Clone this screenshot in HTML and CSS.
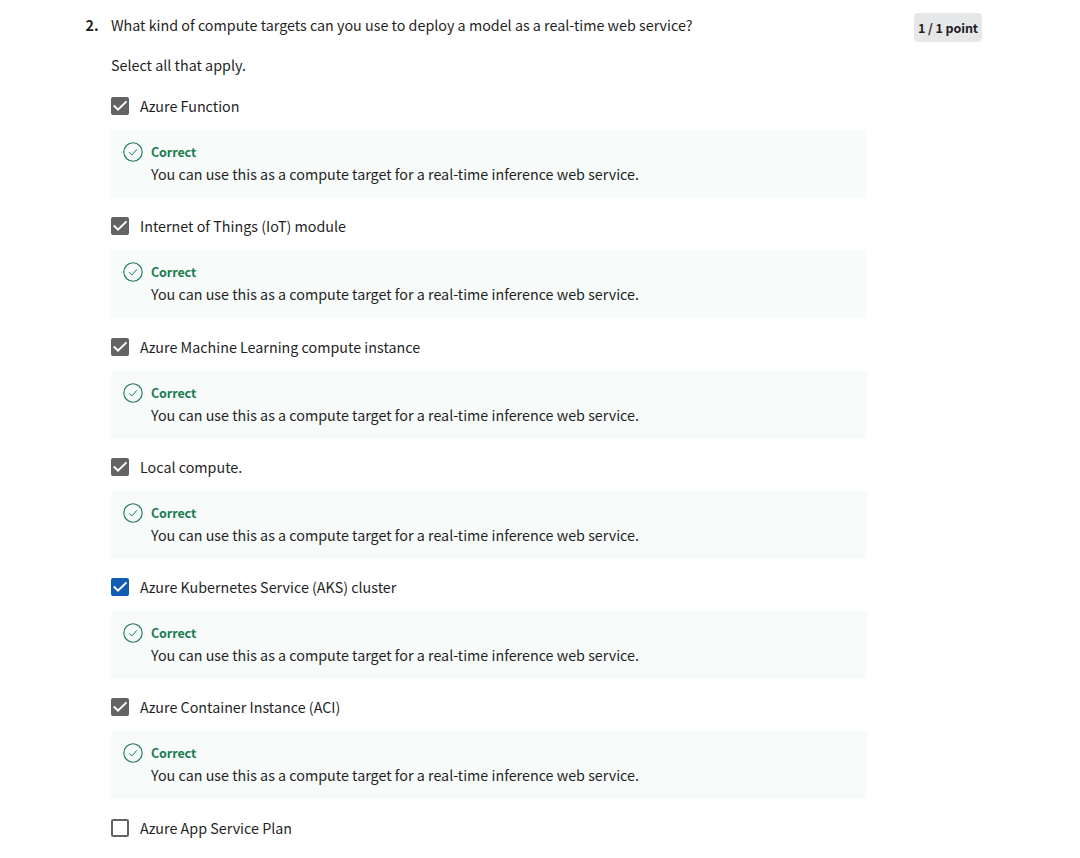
FILE: index.html
```
<!DOCTYPE html>
<html lang="en">
<head>
<meta charset="utf-8">
<title>Quiz</title>
<link rel="stylesheet" href="styles.css">
</head>
<body>
<svg width="0" height="0" class="defs">
  <symbol id="tick" viewBox="0 0 18 18"><path d="M2.8 8.5 7 12.6 15.5 4.4" fill="none" stroke="#fff" stroke-width="2"/></symbol>
  <symbol id="ok" viewBox="0 0 20 20"><g fill="none" stroke="#1d7c50"><circle cx="10" cy="10" r="9.2" stroke-width="1.1"/><path d="M6 10.2 8.8 13 14 7.2" stroke-width="1"/></g></symbol>
</svg>
<main class="question">
  <div class="number">2.</div>
  <div class="body">
    <p class="prompt">What kind of compute targets can you use to deploy a model as a real-time web service?</p>
    <p class="hint">Select all that apply.</p>
    <div class="options" id="options"></div>
  </div>
  <div class="points">1 / 1 point</div>
</main>
<script src="options.js"></script>
</body>
</html>
```
FILE: styles.css
```
* { box-sizing: border-box; }
body { margin: 0; background: #fff; color: #1f1f1f; font: 14.32px/24px "Noto Sans CJK SC", "Noto Sans", sans-serif; overflow: hidden; }
p { margin: 0; }
.defs { display: block; }
.question { display: flex; align-items: flex-start; padding: 13px 98px 0 85.5px; height: 858px; overflow: hidden; }
.number { width: 25.5px; font-weight: 700; }
.body { width: 756px; }
.hint { margin-top: 16px; }
.options { margin-top: 16.95px; }
.option { height: 120.3px; }
.choice { display: flex; align-items: center; gap: 11px; height: 24px; }
.box { width: 18px; height: 18px; border-radius: 2px; background: #636363; }
.box svg, .icon { display: block; width: 100%; height: 100%; }
.box.focus { background: #0f5cb0; }
.box.empty { background: #fff; border: 2px solid #636363; }
.feedback { display: flex; gap: 8px; height: 68px; margin-top: 12px; padding: 12px; background: #f7fbfa; }
.feedback .icon { width: 20px; height: 20px; flex: none; }
.verdict { font-size: 12.53px; line-height: 20px; font-weight: 700; letter-spacing: -0.1px; color: #1d7c50; }
.points { margin-left: auto; width: 68px; height: 29px; border-radius: 4px; background: #e5e7e8; font-size: 12.53px; line-height: 30px; font-weight: 700; letter-spacing: -0.1px; text-align: center; white-space: nowrap; }
```
FILE: options.js
```
const labels = [
  "Azure Function",
  "Internet of Things (IoT) module",
  "Azure Machine Learning compute instance",
  "Local compute.",
  "Azure Kubernetes Service (AKS) cluster",
  "Azure Container Instance (ACI)",
  "Azure App Service Plan"
];
document.getElementById("options").innerHTML = labels.map((label, i) => {
  const checked = i < 6;
  const state = i === 4 ? " focus" : checked ? "" : " empty";
  return `<div class="option"><div class="choice"><span class="box${state}">${checked ? '<svg><use href="#tick"/></svg>' : ""}</span><span>${label}</span></div>${checked ? `<div class="feedback"><svg class="icon"><use href="#ok"/></svg><div><div class="verdict">Correct</div><div class="message">You can use this as a compute target for a real-time inference web service.</div></div></div>` : ""}</div>`;
}).join("");
```
